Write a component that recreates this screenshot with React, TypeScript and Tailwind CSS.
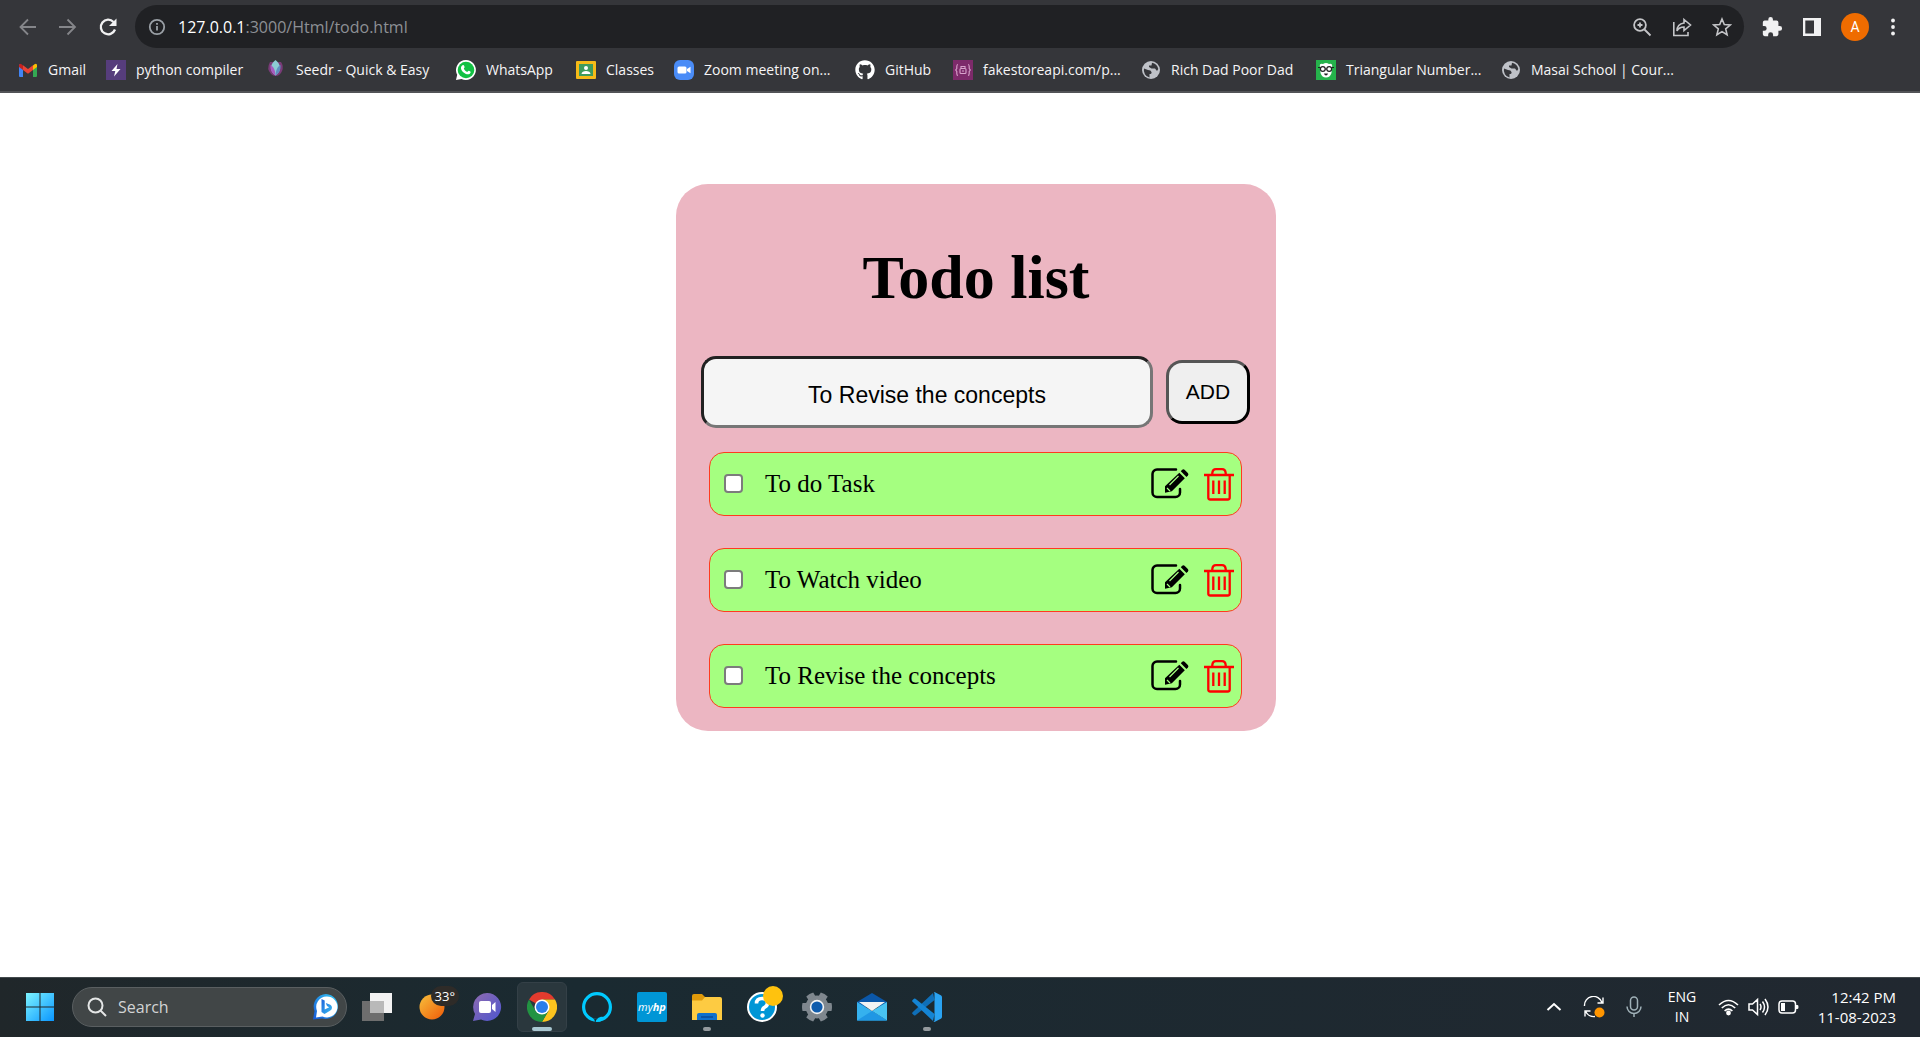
import React, { useState } from "react";
import { FaGithub } from "react-icons/fa";

const bar = "text-[14px] leading-5 font-['Open_Sans',sans-serif]";

function Gmail() {
  return (
    <svg viewBox="0 0 20 20" className="size-5">
      <path d="M1 4v12a1 1 0 0 0 1 1h3V9z" fill="#4285f4" />
      <path d="M19 4v12a1 1 0 0 1-1 1h-3V9z" fill="#34a853" />
      <path d="M15 5.500l1.500-1.300Q19 3 19 5.500V7l-4 3z" fill="#fbbc04" />
      <path d="M5 5.500 3.500 4.200Q1 3 1 5.500V7l4 3z" fill="#c5221f" />
      <path d="M5 5.300 10 9l5-3.700V10l-5 3.700L5 10z" fill="#ea4335" />
    </svg>
  );
}
function Bolt() {
  return (
    <svg viewBox="0 0 20 20" className="size-5">
      <rect width="20" height="20" fill="#563d7c" />
      <path d="M11.500 4 5.500 11h3.800L8 16.500 14.500 9h-4z" fill="#fff" />
    </svg>
  );
}
function Seedr() {
  return (
    <svg viewBox="0 0 20 20" className="size-5">
      <path d="M4 2Q0 9 5 14 7 16 9.500 16 14 16 16 11 18 6 15 2z" fill="#7a3b78" />
      <path d="M9.500 0C4 4 3 11 9.500 15.500 16 11 15 4 9.500 0z" fill="#8ccbd4" />
      <path d="M4.500 5C4 10 6 13 9.500 15.500 9 10 8 7 4.500 5z" fill="#a85cc0" />
      <path d="M14.500 5c.5 5-1.500 8-5 10.500C10 10 11 7 14.500 5z" fill="#5f8fc0" />
    </svg>
  );
}
function Whatsapp() {
  return (
    <svg viewBox="0 0 20 20" className="size-5">
      <path d="M10 0a10 10 0 1 1-4.500 19L0 20l1.200-5.200A10 10 0 0 1 10 0z" fill="#fff" />
      <circle cx="10" cy="10" r="8.300" fill="#12c143" />
      <path d="M6.300 5.500c1.300-1 1.800 0 2.300 1.600.2.600-1 1.200-.6 1.800.8 1.500 1.800 2.300 3.200 2.900.6.200 1-1.300 1.700-1 1.800.8 2 1 1.500 2.200-.7 1.500-2.500 1.700-4.500.9C7 12.500 5.300 10.500 5 8.500c-.1-1.300.3-2.200 1.300-3z" fill="#fff" />
    </svg>
  );
}
function Classes() {
  return (
    <svg viewBox="0 0 20 20" className="size-5">
      <rect y="1" width="20" height="18" rx="1" fill="#f6bb18" />
      <rect x="3" y="4" width="14" height="12" fill="#3f9b5c" />
      <circle cx="10" cy="8" r="2" fill="#fff" />
      <path d="M5.500 14c0-4 9-4 9 0z" fill="#fff" />
    </svg>
  );
}
function Zoom() {
  return (
    <svg viewBox="0 0 20 20" className="size-5">
      <rect width="20" height="20" rx="6" fill="#4a8cf7" />
      <rect x="3.500" y="6.500" width="9" height="7" rx="1.500" fill="#fff" />
      <path d="m13 9 3.500-2.300v6.600L13 11z" fill="#fff" />
    </svg>
  );
}
function Store() {
  return (
    <svg viewBox="0 0 20 20" className="size-5">
      <rect width="20" height="20" fill="#7d2a6a" />
      <g fill="none" stroke="#d9a3cc" strokeWidth="1.100">
        <path d="M5 4.500Q3.800 4.500 3.800 6.500v2L2.700 10l1.100 1.500v2q0 2 1.200 2M15 4.500q1.200 0 1.200 2v2l1.100 1.500-1.100 1.500v2q0 2-1.200 2" />
        <rect x="7" y="8.500" width="6" height="5" rx="1" />
        <path d="M8 8V6.500h4V8M9 11h2" />
      </g>
    </svg>
  );
}
function Globe() {
  return (
    <svg viewBox="0 0 20 20" className="size-5">
      <circle cx="10" cy="10" r="9" fill="#bfc2c8" />
      <path d="M3 8.500l4 1.500q3 0 3.500 2t-2 2v3.500A7.500 7.500 0 0 1 3 8.500zM11 2.800q5 .7 6.300 6.200l-1.300 2-2-2.500H10.500L8 7V5.500h2.500z" fill="#35363a" />
    </svg>
  );
}
function Geek() {
  return (
    <svg viewBox="0 0 20 20" className="size-5">
      <rect width="20" height="20" fill="#25b34b" />
      <path d="M4 7Q3 3 7 4 10 2 13 4q4-1 3 3.500l-.5 5.500q-1.500 4.500-5.500 4.500T4.500 13z" fill="#fff" />
      <g fill="none" stroke="#222" strokeWidth="1.200">
        <circle cx="6.800" cy="9" r="2.400" />
        <circle cx="13.200" cy="9" r="2.400" />
        <path d="M2 7.500h2.500M15.500 7.500H18M9 9h2" />
      </g>
      <path d="M8 13.500h4q-.5 2-2 2t-2-2z" fill="#222" />
    </svg>
  );
}

const bookmarks = [
  { t: "Gmail", icon: <Gmail />, w: "w-[88px]" },
  { t: "python compiler", icon: <Bolt />, w: "w-[160px]" },
  { t: "Seedr - Quick & Easy", icon: <Seedr />, w: "w-[190px]" },
  { t: "WhatsApp", icon: <Whatsapp />, w: "w-[120px]" },
  { t: "Classes", icon: <Classes />, w: "w-[98px]" },
  { t: "Zoom meeting on...", icon: <Zoom />, w: "w-[181px]" },
  { t: "GitHub", icon: <FaGithub className="size-5 text-white" />, w: "w-[98px]" },
  { t: "fakestoreapi.com/p...", icon: <Store />, w: "w-[188px]" },
  { t: "Rich Dad Poor Dad", icon: <Globe />, w: "w-[175px]" },
  { t: "Triangular Number...", icon: <Geek />, w: "w-[185px]" },
  { t: "Masai School | Cour...", icon: <Globe />, w: "w-[180px]" },
];

function Browser() {
  return (
    <header className="shrink-0 border-b-2 border-[#525357] bg-[#35363a]">
      <div className="flex h-[53px] items-center">
        <nav aria-label="History" className="flex w-[135px] items-center gap-5 pl-[18px]">
          <button aria-label="Back">
            <svg viewBox="0 0 20 20" className="size-5" fill="none" stroke="#85868a" strokeWidth="1.800">
              <path d="M18 10H2.500M10 2.500 2.500 10l7.500 7.500" />
            </svg>
          </button>
          <button aria-label="Forward">
            <svg viewBox="0 0 20 20" className="size-5" fill="none" stroke="#85868a" strokeWidth="1.800">
              <path d="M1 10h16M9.500 2.500 17 10l-7.500 7.500" />
            </svg>
          </button>
          <button aria-label="Reload">
            <svg viewBox="0 0 20 20" className="size-5" fill="none" stroke="#f1f1f2" strokeWidth="2.300">
              <path d="M17 12.500A7.300 7.300 0 1 1 15.500 5" />
              <path d="M18.500 1.500V9H11z" fill="#f1f1f2" stroke="none" />
            </svg>
          </button>
        </nav>
        <div className="flex h-[43px] flex-1 items-center rounded-full bg-[#202124] pr-3 pl-[13px]">
          <svg viewBox="0 0 20 20" className="mr-3 size-[18px]" fill="none" stroke="#9aa0a6" strokeWidth="2">
            <circle cx="10" cy="10" r="8" />
            <path d="M10 9v5M10 5.500v2" />
          </svg>
          <a href="#" className="flex-1 font-['Open_Sans',sans-serif] text-[16px] leading-6 text-[#8d9095]">
            <span className="text-white">127.0.0.1</span>:3000/Html/todo.html
          </a>
          <div className="flex items-center gap-5 text-[#c4c5c8]">
            <button aria-label="Zoom">
              <svg viewBox="0 0 20 20" className="size-5" fill="none" stroke="currentColor" strokeWidth="1.800">
                <circle cx="8" cy="8" r="5.900" />
                <path d="m12.500 12.500 6 6M8 5.500v5M5.500 8h5" />
              </svg>
            </button>
            <button aria-label="Share">
              <svg viewBox="0 0 20 20" className="size-5" fill="none" stroke="currentColor" strokeWidth="1.600">
                <path d="M1.800 5v13.500H16V15" />
                <path d="M12 2.500 18.500 8 12 13.500V10q-5 0-7 4Q5 7 12 6z" />
              </svg>
            </button>
            <button aria-label="Bookmark this tab">
              <svg viewBox="0 0 20 20" className="size-5" fill="none" stroke="currentColor" strokeWidth="1.600">
                <path d="m10 2 2.300 5.500 6 .5-4.600 3.900 1.400 5.800L10 14.600l-5.100 3.100 1.400-5.800L1.700 8l6-.5z" />
              </svg>
            </button>
          </div>
        </div>
        <div className="flex items-center gap-[19px] pr-[22px] pl-[17px] text-[#f1f1f2]">
          <button aria-label="Extensions">
            <svg viewBox="0 0 24 24" className="size-[22px]" fill="currentColor">
              <path d="M20.500 11H19V7a2 2 0 0 0-2-2h-4V3.500a2.500 2.500 0 0 0-5 0V5H4a2 2 0 0 0-2 2v3.800h1.500a2.700 2.700 0 0 1 0 5.400H2V20a2 2 0 0 0 2 2h3.800v-1.500a2.700 2.700 0 0 1 5.400 0V22H17a2 2 0 0 0 2-2v-4h1.500a2.500 2.500 0 0 0 0-5z" />
            </svg>
          </button>
          <button aria-label="Side panel">
            <svg viewBox="0 0 20 20" className="size-5">
              <path d="M1 1h18v18H1zM3.300 3.500v13H12v-13z" fill="currentColor" fillRule="evenodd" />
            </svg>
          </button>
          <button aria-label="Profile" className="size-7 rounded-full bg-[#ef6c00] font-['Roboto',sans-serif] text-[14px] leading-7 text-white">
            A
          </button>
          <button aria-label="Menu" className="px-[3px]">
            <svg viewBox="0 0 4 20" className="h-5 w-1" fill="currentColor">
              <circle cx="2" cy="3.500" r="1.900" />
              <circle cx="2" cy="10" r="1.900" />
              <circle cx="2" cy="16.500" r="1.900" />
            </svg>
          </button>
        </div>
      </div>
      <nav aria-label="Bookmarks" className="flex h-[38px] items-center pb-1 pl-[18px]">
        {bookmarks.map((b) => (
          <a key={b.t} href="#" className={"flex items-center gap-[10px] whitespace-nowrap text-[#f5f5f6] " + bar + " " + b.w}>
            {b.icon}
            {b.t}
          </a>
        ))}
      </nav>
    </header>
  );
}

function EditIcon() {
  return (
    <svg viewBox="0 0 38 32" className="h-8 w-[38px]">
      <path d="M25 1.500H6A4.500 4.500 0 0 0 1.500 6v18.500A4.500 4.500 0 0 0 6 29h18.500a4.500 4.500 0 0 0 4.500-4.500V21" fill="none" stroke="#000" strokeWidth="2.500" strokeLinecap="round" />
      <path d="M28.300 4.800 33.800 10.300 20.800 23.300 14 24.800V18.200z" fill="#000" />
      <path d="m29.800 3.200 1.400-1.400q1.300-1 2.600.1l3 3q1.200 1.300.1 2.600l-1.400 1.500z" fill="#000" />
      <path d="m18.500 17 9-9M16 20l3 3" stroke="#a5ff80" strokeWidth="1.200" />
    </svg>
  );
}
function TrashIcon() {
  return (
    <svg viewBox="0 0 30 34" className="h-[34px] w-[30px]" fill="none" stroke="#f00" strokeWidth="2.300">
      <path d="M0 8h30M8.300 8V6.200Q8.600 2.200 12 2.200h6q3.400 0 3.700 4V8M4.300 8v22.500q0 2 2 2h17.400q2 0 2-2V8" />
      <path d="M9.300 13.500v13.500M15 13.500v13.500M20.700 13.500v13.500" />
    </svg>
  );
}

function Todo() {
  const [tasks, setTasks] = useState(["To do Task", "To Watch video", "To Revise the concepts"]);
  const [text, setText] = useState("To Revise the concepts");
  return (
    <main className="flex flex-1 flex-col items-center bg-white pt-[91px] pl-8">
      <section className="w-full max-w-[600px] rounded-[32px] bg-[#ecb6c2] px-[25px] pb-[23px] font-['Liberation_Serif',serif] text-black">
        <h1 className="pt-[57px] pb-[43px] text-center text-[62px] leading-[72px] font-bold">Todo list</h1>
        <form
          className="flex items-center gap-[13px] pr-px"
          onSubmit={(e) => {
            e.preventDefault();
            setTasks([...tasks, text]);
          }}
        >
          <input
            aria-label="New task"
            value={text}
            onChange={(e) => setText(e.target.value)}
            className="h-[72px] min-w-0 flex-1 rounded-[15px] border-[3px] border-t-[#212121] border-r-[#767676] border-b-[#767676] border-l-[#212121] bg-[#f5f5f5] pt-1.5 text-center font-['Liberation_Sans',sans-serif] text-[23px]"
          />
          <button className="h-16 w-[84px] rounded-[16px] border-[3px] border-t-[#555] border-r-black border-b-black border-l-[#555] bg-[#efefef] font-['Liberation_Sans',sans-serif] text-[21px]">
            ADD
          </button>
        </form>
        <ul className="mt-6 flex flex-col gap-8 pr-[9px] pl-2">
          {tasks.map((t, i) => (
            <li key={i} className="flex h-16 items-center rounded-[15px] border border-[#ff3b1f] bg-[#a5ff80] pr-[7px] pb-px pl-[14px]">
              <label className="flex flex-1 items-center gap-[22px] text-[25px] leading-8">
                <input type="checkbox" className="size-[19px] appearance-none rounded-[4px] border-2 border-[#7c7c7c] bg-white checked:bg-[#0075ff]" />
                {t}
              </label>
              <button aria-label={"Edit " + t}>
                <EditIcon />
              </button>
              <button aria-label={"Delete " + t} className="ml-[15px]" onClick={() => setTasks(tasks.filter((_, j) => j !== i))}>
                <TrashIcon />
              </button>
            </li>
          ))}
        </ul>
      </section>
    </main>
  );
}

function AppButton({ label, state, children }: { label: string; state?: "active" | "open"; children: React.ReactNode }) {
  return (
    <button
      aria-label={label}
      className={
        "relative flex size-[50px] items-center justify-center rounded-md border " +
        (state === "active" ? "border-[#344047] bg-[#2a373d]" : "border-transparent")
      }
    >
      {children}
      {state === "active" && <span className="absolute bottom-0 h-1 w-5 rounded-full bg-[#a9c7d1]" />}
      {state === "open" && <span className="absolute bottom-0 h-1 w-2 rounded-full bg-[#949a9e]" />}
    </button>
  );
}

function Taskbar() {
  return (
    <footer className="flex h-[60px] shrink-0 items-center border-t border-[#434a4d] bg-linear-to-r from-[#20272a] via-[#1a2a31] via-30% to-[#212830] pr-[24px] pb-px pl-[15px] font-['Open_Sans',sans-serif] text-white">
      <AppButton label="Start">
        <svg viewBox="0 0 30 30" className="size-[30px]">
          <defs>
            <linearGradient id="win" x1="0" y1="0" x2="1" y2="1">
              <stop offset="0" stopColor="#7df4ff" />
              <stop offset="1" stopColor="#0a96ff" />
            </linearGradient>
          </defs>
          <path d="M1 1h13.500v13.500H1zM15.500 1H29v13.500H15.500zM1 15.500h13.500V29H1zM15.500 15.500H29V29H15.500z" fill="url(#win)" />
        </svg>
      </AppButton>
      <label className="ml-[7px] flex h-10 w-[275px] items-center rounded-full border border-[#5a5f61] bg-[#414647] pr-[7px] pl-[14px]">
        <svg viewBox="0 0 20 20" className="mr-[11px] size-5 shrink-0" fill="none" stroke="#e4e6e6" strokeWidth="2">
          <circle cx="8.500" cy="8.500" r="7" />
          <path d="m13.500 13.500 5.500 5.500" />
        </svg>
        <input aria-label="Search" placeholder="Search" className="min-w-0 flex-1 bg-transparent text-[16px] outline-none placeholder:text-[#d2d4d5]" />
        <svg viewBox="0 0 26 26" className="size-[26px] shrink-0">
          <defs>
            <linearGradient id="bing" x1="1" y1="0" x2="0" y2="1">
              <stop offset="0" stopColor="#35c8f2" />
              <stop offset="1" stopColor="#1457d8" />
            </linearGradient>
            <linearGradient id="bingb" x1="0" y1="0" x2="1" y2="1">
              <stop offset="0" stopColor="#1e62dc" />
              <stop offset="1" stopColor="#38bdf0" />
            </linearGradient>
          </defs>
          <path d="M13 0a12.500 12.500 0 1 1-4 24.500L0 25.500 1.500 17A12.500 12.500 0 0 1 13 0z" fill="url(#bing)" />
          <path d="M13.500 2.500a10.500 10.500 0 1 1-4 20L3 23.500 4 17a10.500 10.500 0 0 1 9.500-14.500z" fill="#fff" />
          <path d="m8.500 5 3.200 1.500v9l4.500-2.300-2.200-1.200-1.200-3 4.500 1.800q1.700 1 1.700 3t-2 3L11.500 20l-3-2z" fill="url(#bingb)" />
        </svg>
      </label>
      <div className="ml-[5px] flex items-center gap-[5px]">
        <AppButton label="Task view">
          <svg viewBox="0 0 30 28" className="h-7 w-[30px]">
            <path d="M8 0h22v20H8z" fill="#f2f2f2" />
            <path d="M0 8h22v20H0z" fill="#6e6e6e" />
            <path d="M8 8h14v12H8z" fill="#b9b9b9" />
          </svg>
        </AppButton>
        <AppButton label="Weather">
          <svg viewBox="0 0 26 26" className="size-[26px]">
            <defs>
              <linearGradient id="sun" x1="0" y1="0" x2="1" y2="1">
                <stop offset="0" stopColor="#f7c03c" />
                <stop offset="1" stopColor="#ee5a08" />
              </linearGradient>
            </defs>
            <circle cx="13" cy="13" r="12.500" fill="url(#sun)" />
          </svg>
          <span className="absolute top-[3px] -right-[3px] rounded-full bg-[#2e2b28] px-1 text-[13px] leading-5">33°</span>
        </AppButton>
        <AppButton label="Chat">
          <svg viewBox="0 0 30 30" className="size-[30px]">
            <defs>
              <linearGradient id="chat" x1="0" y1="0" x2="1" y2="1">
                <stop offset="0" stopColor="#8f6bb0" />
                <stop offset="1" stopColor="#4d55cf" />
              </linearGradient>
            </defs>
            <path d="M15 1a14 14 0 1 1-6 26.600L1 29l2-7A14 14 0 0 1 15 1z" fill="url(#chat)" />
            <rect x="7" y="9" width="12" height="12" rx="2" fill="#fff" />
            <path d="m20 13 3.500-3v10L20 17z" fill="#fff" />
          </svg>
        </AppButton>
        <AppButton label="Chrome" state="active">
          <svg viewBox="0 0 30 30" className="size-[30px]">
            <path d="M15 15 2 7.500A15 15 0 0 1 28 7.500H15z" fill="#e33b2e" />
            <path d="M15 15V7.500H28A15 15 0 0 1 15 30l6.500-11.300z" fill="#fcc31e" />
            <path d="M15 15l6.500 3.700L15 30A15 15 0 0 1 2 7.500L8.500 18.700z" fill="#229342" />
            <circle cx="15" cy="15" r="7.500" fill="#fff" />
            <circle cx="15" cy="15" r="6" fill="#2b7de9" />
          </svg>
        </AppButton>
        <AppButton label="Alexa">
          <svg viewBox="0 0 30 30" className="size-[30px]">
            <circle cx="15" cy="15" r="13.400" fill="none" stroke="#00caff" strokeWidth="3.200" />
            <path d="M13.500 29.500Q13.500 27 19 24.800L24 25l-6 4.800z" fill="#00caff" />
            <path d="M12.600 30.500q1-2.700-2-4.200l5.500.3q-2.600 1-2.500 4z" fill="#1a2a31" />
          </svg>
        </AppButton>
        <AppButton label="myHP">
          <span className="flex size-[30px] items-center justify-center rounded-[2px] bg-[#0096d6] text-[11px] leading-4 italic">
            my<b>hp</b>
          </span>
        </AppButton>
        <AppButton label="File Explorer" state="open">
          <svg viewBox="0 0 30 30" className="size-[30px]">
            <path d="M0 4q0-2 2-2h8l3.500 3.500V10H0z" fill="#e09a0a" />
            <path d="M0 8.500h10L13 5h15q2 0 2 2v21H0z" fill="#fdcb42" />
            <path d="M5 28v-5q0-2 2-2h16q2 0 2 2v5z" fill="#1070cc" />
            <path d="M9 25h12" stroke="#0a4b9a" strokeWidth="1.500" />
          </svg>
        </AppButton>
        <AppButton label="Get Help">
          <svg viewBox="0 0 30 30" className="size-[30px]">
            <circle cx="15" cy="15" r="14" fill="#0096d6" stroke="#fff" strokeWidth="2" />
            <path d="M9.500 11.500q0-5 5.500-5t5.500 4.500q0 2.500-2.500 4-2.500 1.300-2.500 4" fill="none" stroke="#fff" strokeWidth="3.600" />
            <circle cx="15.500" cy="23.500" r="2.200" fill="#fff" />
          </svg>
          <span className="absolute top-[3px] right-[3px] size-5 rounded-full bg-[#ffc20e]" />
        </AppButton>
        <AppButton label="Settings">
          <svg viewBox="0 0 30 30" className="size-[30px]">
            <g fill="#7f878e">
              <circle cx="15" cy="15" r="11.500" />
              {[0, 60, 120, 180, 240, 300].map((a) => (
                <path key={a} d="M25 11h4.500q1 4 0 8H25z" transform={"rotate(" + a + " 15 15)"} />
              ))}
            </g>
            <circle cx="15" cy="15" r="7.200" fill="#f4f4f4" />
            <circle cx="15" cy="15" r="5.600" fill="#0f5cad" />
          </svg>
        </AppButton>
        <AppButton label="Mail">
          <svg viewBox="0 0 30 30" className="size-[30px]">
            <path d="M0 10 15 1l15 9v5H0z" fill="#0b57a8" />
            <path d="M0 10 15 19 30 28.500H0z" fill="#35b1ee" />
            <path d="M30 10v18.500L15 19z" fill="#48c3f2" />
            <path d="M15 19 30 28.500H0z" fill="#1f97e4" />
            <path d="M2 10h26l-13 9z" fill="#f3f3f3" />
          </svg>
        </AppButton>
        <AppButton label="Visual Studio Code" state="open">
          <svg viewBox="0 0 30 30" className="size-[30px]">
            <path d="M22.500 8 3.500 23.300q-.8.600-1.500 0L.6 22q-.9-.9 0-1.700L21 1z" fill="#0f6fb8" />
            <path d="M22.500 22 3.500 6.700q-.8-.6-1.500 0L.6 8q-.9.900 0 1.700L21 29z" fill="#1484d4" />
            <path d="M21 .6q.9-.9 2-.3l5.800 2.900q1.200.6 1.200 2v19.600q0 1.400-1.200 2L23 29.700q-1.100.6-2-.3 1.500.8 1.500-1.200V1.800Q22.500-.2 21 .6z" fill="#2aa3f2" />
          </svg>
        </AppButton>
      </div>
      <div className="ml-auto flex items-center text-[15px] leading-5">
        <button aria-label="Show hidden icons">
          <svg viewBox="0 0 16 16" className="size-4" fill="none" stroke="#fff" strokeWidth="2">
            <path d="m1.500 11 6.500-6 6.500 6" />
          </svg>
        </button>
        <button aria-label="Updates" className="ml-[21px]">
          <svg viewBox="0 0 22 22" className="size-[22px]" fill="none" stroke="#fff" strokeWidth="1.400">
            <path d="M1.500 10A9 9 0 0 1 19 6.500M20 1.500V7h-5.500M12 20.500A9 9 0 0 1 2.500 15M2 20.500V15h5.500" />
            <circle cx="16.500" cy="16.500" r="5" fill="#ff9500" stroke="none" />
          </svg>
        </button>
        <button aria-label="Microphone" className="ml-[21px]">
          <svg viewBox="0 0 16 22" className="h-[22px] w-4" fill="none" stroke="#9fb0b7" strokeWidth="1.500">
            <rect x="4.500" y="1" width="7" height="13" rx="3.500" />
            <path d="M1 10.500a7 7 0 0 0 14 0M8 17.500V21" />
          </svg>
        </button>
        <button className="ml-[23px] w-[34px] text-center text-[14px]">
          ENG
          <br />
          IN
        </button>
        <button aria-label="Network, volume and battery" className="ml-[19px] flex items-center gap-[9px]">
          <svg viewBox="0 0 21 18" className="h-[18px] w-[21px]" fill="none" stroke="#fff" strokeWidth="1.600">
            <path d="M1 7q9.500-9 19 0M3.800 10q6.700-6.500 13.400 0M6.600 13q3.900-3.800 7.800 0" />
            <circle cx="10.500" cy="15" r="1.600" fill="#fff" />
          </svg>
          <svg viewBox="0 0 21 20" className="h-5 w-[21px]" fill="none" stroke="#fff" strokeWidth="1.500">
            <path d="M1 7v6h3.500l5 4.500v-15L4.500 7zM12 7q2 3 0 6M14.500 4.500q4 5.500 0 11M17 2q6 8 0 16" />
          </svg>
          <svg viewBox="0 0 21 16" className="h-4 w-[21px]">
            <rect x="1" y="2" width="16.500" height="12" rx="3" fill="none" stroke="#fff" strokeWidth="1.500" />
            <path d="M3 4h4v8H3zM18 6h1.500q1 0 1 2t-1 2H18z" fill="#fff" />
          </svg>
        </button>
        <button className="ml-[17px] w-[80px] text-right whitespace-nowrap">
          12:42 PM
          <br />
          11-08-2023
        </button>
      </div>
    </footer>
  );
}

export default function App() {
  return (
    <div className="flex min-h-screen flex-col">
      <Browser />
      <Todo />
      <Taskbar />
    </div>
  );
}
